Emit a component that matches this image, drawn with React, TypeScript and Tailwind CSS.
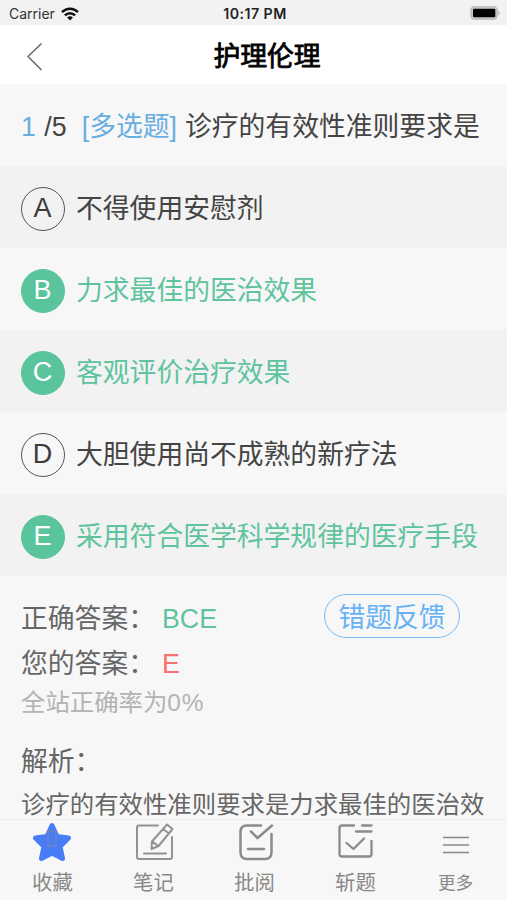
import type { ReactNode } from "react";

const latin = "font-['Liberation_Sans','Noto_Sans_CJK_SC',sans-serif]";

type OptionData = { letter: string; text: string; correct: boolean };

const options: OptionData[] = [
  { letter: "A", text: "不得使用安慰剂", correct: false },
  { letter: "B", text: "力求最佳的医治效果", correct: true },
  { letter: "C", text: "客观评价治疗效果", correct: true },
  { letter: "D", text: "大胆使用尚不成熟的新疗法", correct: false },
  { letter: "E", text: "采用符合医学科学规律的医疗手段", correct: true },
];

function StatusBar() {
  return (
    <div className="grid h-[25px] shrink-0 grid-cols-3 items-center bg-[#f2f2f2] pt-[3px] pr-[6px] pl-[9px] font-['Inter',sans-serif] text-[14px] leading-none text-[#222]">
      <div className="flex items-center gap-[6px]">
        <span className="text-[#333]">Carrier</span>
        <svg className="-mt-px" width="18" height="14" viewBox="0 0 18 14" fill="none" stroke="#111" strokeWidth="2.5">
          <path d="M1 5.2C5.5 .6 12.500 .6 17 5.200" />
          <path d="M3.900 8.300C6.800 5.400 11.200 5.400 14.100 8.300" />
          <path d="M9 13.600L6.100 10.600Q9 8 11.900 10.600Z" fill="#111" stroke="none" />
        </svg>
      </div>
      <div className="text-center text-[14.2px] font-semibold tracking-[0.45px] whitespace-nowrap">10:17 PM</div>
      <svg className="-mt-[2px] justify-self-end" width="31" height="14" viewBox="0 0 31 14">
        <rect x="1" y=".8" width="26" height="12.400" rx="3.500" fill="#ccc" stroke="#b5b5b5" strokeWidth="1.300" />
        <rect x="3" y="2.700" width="22.300" height="8.600" rx="1" fill="#000" />
        <path d="M28.300 4.300Q31.500 7 28.300 9.700Z" fill="#b5b5b5" />
      </svg>
    </div>
  );
}

function Option({ letter, text, correct, index }: OptionData & { index: number }) {
  return (
    <div className={`flex h-[82px] shrink-0 items-center gap-[11px] pl-[21px] ${index % 2 === 0 ? "bg-[#f2f2f2]" : "bg-[#f7f7f7]"}`}>
      <div
        className={`mt-[3px] flex size-[44px] items-center justify-center rounded-full border-[1.5px] pr-px text-[27px] leading-none ${
          correct ? "border-[#5ac49c] bg-[#5ac49c] text-white" : "border-[#555] text-[#3c3c3c]"
        }`}
      >
        {letter}
      </div>
      <div className={`pt-[3px] text-[26.8px] leading-[40px] whitespace-nowrap ${correct ? "text-[#5fc49e]" : "text-[#444]"}`}>{text}</div>
    </div>
  );
}

function Tab({ label, children, small }: { label: string; children: ReactNode; small?: boolean }) {
  return (
    <div className="flex w-[101px] flex-col items-center">
      <div className="flex h-[45px] items-center">{children}</div>
      <span className={small ? "mt-[4px] mr-[2px] text-[17.6px] leading-[28px]" : "mt-[4px] text-[20.4px] leading-[28px]"}>{label}</span>
    </div>
  );
}

export default function App() {
  return (
    <div className={`flex h-[900px] w-[507px] flex-col overflow-hidden bg-[#f7f7f7] ${latin}`}>
      <StatusBar />
      <header className="grid h-[59px] shrink-0 grid-cols-[80px_1fr_80px] items-center bg-white pl-[27px]">
        <svg className="mt-[4px]" width="16" height="30" viewBox="0 0 16 30" fill="none" stroke="#666" strokeWidth="1.500">
          <path d="M14.500 1.500L1 14.500L14.500 28" />
        </svg>
        <h1 className="pt-[4px] text-center text-[26.8px] leading-[40px] font-normal text-black [-webkit-text-stroke:0.8px_#000]">护理伦理</h1>
      </header>

      <div className="flex h-[82px] shrink-0 items-center pt-[3px] pl-[21px] text-[26.8px] leading-[40px] whitespace-pre text-[#444]">
        <span className="text-[#69aee0]">1</span>
        <span className="ml-px"> /5</span>
        <span className="ml-[15px] text-[#69aee0]">[多选题]</span>
        <span className="ml-[8px]">诊疗的有效性准则要求是</span>
      </div>

      {options.map((o, i) => (
        <Option key={o.letter} {...o} index={i} />
      ))}

      <section className="flex h-[243px] shrink-0 flex-col overflow-hidden pt-[21px] pl-[21px] text-[26.8px] whitespace-nowrap text-[#666]">
        <div className="flex h-[45px] shrink-0 items-center justify-between pr-[47px]">
          <div className="flex">
            <span className="w-[141px]">正确答案：</span>
            <span className="text-[#5fc49e]">BCE</span>
          </div>
          <button className="-mt-[7px] flex h-[44px] w-[136px] items-center justify-center rounded-full border-[1.5px] border-[#7cbcf5] pt-[3px] text-[26.8px] leading-[40px] text-[#66b2f5]">错题反馈</button>
        </div>
        <div className="flex h-[45px] shrink-0 items-center">
          <span className="w-[141px]">您的答案：</span>
          <span className="text-[#f87171]">E</span>
        </div>
        <div className="h-[34px] shrink-0 text-[24.4px] leading-[31px] text-[#b3b3b3]">
          全站正确率为<span className="tracking-[0.8px]">0%</span>
        </div>
        <div className="mt-[19px] h-[43px] shrink-0 leading-[44px]">解析：</div>
        <div className="h-[44px] shrink-0 text-[24.4px] leading-[44px]">诊疗的有效性准则要求是力求最佳的医治效</div>
      </section>

      <nav className="flex h-[82px] shrink-0 border-t border-[#eee] bg-[#f7f7f7] pl-[2px] text-[#888]">
        <Tab label="收藏">
          <svg className="relative -top-px -left-px" width="40" height="40" viewBox="0 0 40 40">
            <path d="M20 3.500L25 14.500L36.500 16L28 24.500L30.500 36.500L20 31L9.500 36.500L12 24.500L3.500 16L15 14.500Z" fill="#487df5" stroke="#487df5" strokeWidth="5" strokeLinejoin="round" />
            <rect x="16" y="9" width="8" height="15" fill="none" stroke="#6f83ba" strokeWidth="1.500" />
          </svg>
        </Tab>
        <Tab label="笔记">
          <svg className="relative -top-px left-px" width="40" height="40" viewBox="0 0 40 40" fill="none" stroke="#929292" strokeWidth="2" strokeLinecap="round" strokeLinejoin="round">
            <path d="M23 3.500H4Q2 3.500 2 5.500V35Q2 37 4 37H35Q37 37 37 35V15M9 31.500H31" />
            <path d="M32 2.500L37.500 7L23.500 24L16.500 27L17 19.500ZM17.500 19.500L23 24M28 7L34 11.500" />
          </svg>
        </Tab>
        <Tab label="批阅">
          <svg className="relative -top-px left-px" width="40" height="40" viewBox="0 0 40 40" fill="none" stroke="#8b8b8b" strokeWidth="2.500" strokeLinecap="round" strokeLinejoin="round">
            <path d="M25 3.500H11Q4.500 3.500 4.500 10V30Q4.500 37 11 37H29Q35.500 37 35.500 30V12M15 9.500L21.500 16L36 3.500M12 27H28" />
          </svg>
        </Tab>
        <Tab label="斩题">
          <svg className="relative -top-px" width="40" height="40" viewBox="0 0 40 40" fill="none" stroke="#8b8b8b" strokeWidth="2.300" strokeLinecap="round" strokeLinejoin="round">
            <path d="M18 3.500H6Q3.500 3.500 3.500 6V32Q3.500 34.500 6 34.500H33Q35.500 34.500 35.500 32V19M10.500 21L17.500 27L28 16.500M26 3.500H35.500M20 9.500H35.500" />
          </svg>
        </Tab>
        <Tab label="更多" small>
          <svg className="relative top-[2px] -left-px" width="26" height="20" viewBox="0 0 26 20" stroke="#888" strokeWidth="1.500">
            <path d="M0 2.500H26M0 10H26M0 17.500H26" />
          </svg>
        </Tab>
      </nav>
    </div>
  );
}
